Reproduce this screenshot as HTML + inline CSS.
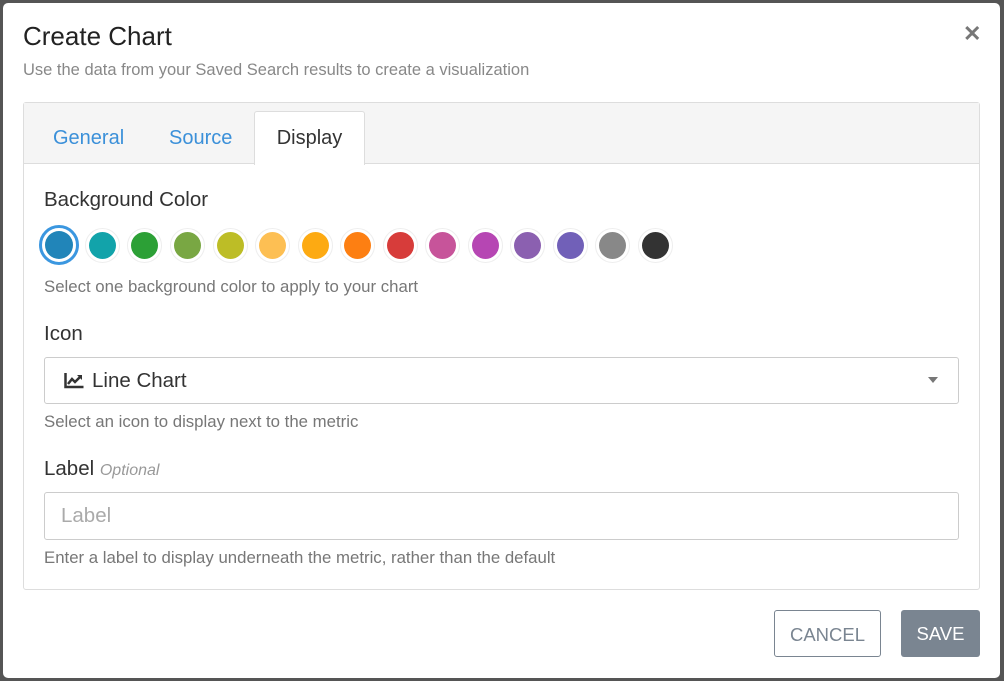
<!DOCTYPE html>
<html><head><style>
*{box-sizing:border-box;margin:0;padding:0}
body{width:1004px;height:681px;background:#555;font-family:"Liberation Sans",sans-serif;position:relative;overflow:hidden}
.m{position:absolute;left:3px;top:3px;width:997px;height:675px;background:#fff;border-radius:5px}
.a{position:absolute;white-space:nowrap}
.t{left:20px;top:18px;font-size:26px;color:#222}
.x{left:960px;top:18px;font-size:22px;color:#777;font-weight:bold}
.s{left:20px;top:58px;font-size:16.5px;color:#888}
.p{left:20px;top:99px;width:957px;height:488px;border:1px solid #ddd;border-radius:3px}
.hd{position:absolute;left:0;top:0;right:0;height:61px;background:#f5f5f5;border-bottom:1px solid #ddd}
.tab{position:absolute;top:24px;font-size:20px;color:#3b90d9}
.act{position:absolute;left:230px;top:8px;width:111px;height:54px;background:#fff;border:1px solid #ddd;border-bottom:none;border-radius:3px 3px 0 0;font-size:20px;color:#333;text-align:center;padding-top:15px}
.lb{font-size:20.5px;color:#333}
.h{font-size:16.8px;color:#777}
.sw{position:absolute;top:125px;width:35px;height:35px;border-radius:50%;border:1px solid #eee;padding:3px}
.sw i{display:block;width:27px;height:27px;border-radius:50%}
.box{position:absolute;left:20px;width:915px;border:1px solid #ccc;border-radius:3px}
.btn{position:absolute;top:607px;height:47px;border-radius:3px;font-size:18.5px;text-align:center;padding-top:13px}
</style></head><body><div class="m">
<div class="a t">Create Chart</div>
<div class="a x">✕</div>
<div class="a s">Use the data from your Saved Search results to create a visualization</div>
<div class="a p">
<div class="hd"></div>
<div class="a tab" style="left:29px">General</div>
<div class="a tab" style="left:145px">Source</div>
<div class="act">Display</div>
<div class="a lb" style="left:20px;top:85px">Background Color</div>
<div class="sw" style="left:15px;width:40px;height:40px;top:122px;border:3px solid #3b97e0;padding:3px"><i style="background:#2185b9;width:28px;height:28px"></i></div>
<div class="sw" style="left:61px"><i style="background:#12a3aa"></i></div>
<div class="sw" style="left:103px"><i style="background:#2ca036"></i></div>
<div class="sw" style="left:146px"><i style="background:#79a743"></i></div>
<div class="sw" style="left:189px"><i style="background:#bdbd26"></i></div>
<div class="sw" style="left:231px"><i style="background:#fdbf53"></i></div>
<div class="sw" style="left:274px"><i style="background:#fdaa12"></i></div>
<div class="sw" style="left:316px"><i style="background:#fd7f12"></i></div>
<div class="sw" style="left:359px"><i style="background:#d73c3a"></i></div>
<div class="sw" style="left:401px"><i style="background:#c7549a"></i></div>
<div class="sw" style="left:444px"><i style="background:#b646b3"></i></div>
<div class="sw" style="left:486px"><i style="background:#8b60b0"></i></div>
<div class="sw" style="left:529px"><i style="background:#7160b8"></i></div>
<div class="sw" style="left:571px"><i style="background:#888"></i></div>
<div class="sw" style="left:614px"><i style="background:#333"></i></div>
<div class="a h" style="left:20px;top:174px">Select one background color to apply to your chart</div>
<div class="a lb" style="left:20px;top:219px">Icon</div>
<div class="box" style="top:254px;height:47px">
<svg style="position:absolute;left:19px;top:14px" width="20" height="17" viewBox="0 0 20 17"><path d="M1.5 1v14h18" stroke="#333" stroke-width="2.5" fill="none"/><path d="M4 12l4-5 3 3 5-5" stroke="#333" stroke-width="2.5" fill="none"/><path d="M13 3h5v5z" fill="#333"/></svg>
<div class="a" style="left:47px;top:11px;font-size:20.5px;color:#333">Line Chart</div>
<div class="a" style="right:20px;top:19px;border:5px solid transparent;border-top:6px solid #777"></div>
</div>
<div class="a h" style="left:20px;top:309px">Select an icon to display next to the metric</div>
<div class="a lb" style="left:20px;top:354px">Label <i style="font-size:16px;color:#999">Optional</i></div>
<div class="box" style="top:389px;height:48px"><div class="a" style="left:16px;top:11px;font-size:20.5px;color:#aaa">Label</div></div>
<div class="a h" style="left:20px;top:445px">Enter a label to display underneath the metric, rather than the default</div>
</div>
<div class="btn" style="left:771px;width:107px;border:1px solid #7a8591;color:#7a8591">CANCEL</div>
<div class="btn" style="left:898px;width:79px;background:#7a8591;color:#fff">SAVE</div>
</div></body></html>
